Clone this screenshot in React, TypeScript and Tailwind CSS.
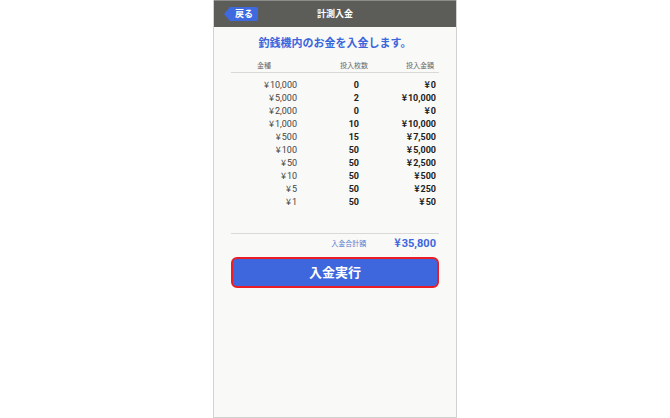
import React from "react";

const rows: [string, string, string][] = [
  ["10,000", "0", "0"],
  ["5,000", "2", "10,000"],
  ["2,000", "0", "0"],
  ["1,000", "10", "10,000"],
  ["500", "15", "7,500"],
  ["100", "50", "5,000"],
  ["50", "50", "2,500"],
  ["10", "50", "500"],
  ["5", "50", "250"],
  ["1", "50", "50"],
];

function Yen() {
  return (
    <span className="leading-none mr-[1px]" style={{ fontFamily: '"Noto Sans CJK JP", sans-serif' }}>
      ¥
    </span>
  );
}

export default function App() {
  return (
    <div
      className="w-[670px] h-[418px] bg-white flex justify-center overflow-hidden"
      style={{ fontFamily: 'Roboto, "Noto Sans CJK JP", sans-serif' }}
    >
      <div className="w-[244px] h-[418px] flex flex-col bg-[#f9f9f7] border-x border-b border-[#d2d2d0]">
        <div className="h-[27px] bg-[#5c5d59] border-t border-[#8c8c8a] relative flex items-center justify-center">
          <div className="absolute left-[10px] top-[6px] flex items-center">
            <div className="w-0 h-0 border-y-[7px] border-y-transparent border-r-[6px] border-r-[#3f69df]" />
            <div className="h-[14px] w-[28px] bg-[#3f69df] rounded-r-[2px] flex items-center justify-center text-white text-[9px] font-bold leading-none">
              戻る
            </div>
          </div>
          <div className="text-white text-[9px] font-bold leading-none">計測入金</div>
        </div>

        <div className="px-[17px] flex flex-col">
          <div className="pt-[10px] h-[24px] text-center text-[11px] leading-[14px] font-bold text-[#3b66dc]">
            釣銭機内のお金を入金します。
          </div>
          <div className="mt-[10px] grid grid-cols-[66px_74px_1fr] text-[7px] leading-[10px] text-[#666] pb-[1px] border-b border-[#d9d9d7]">
            <div className="text-center">金種</div>
            <div className="text-right pr-[3px]">投入枚数</div>
            <div className="text-right pr-[5px]">投入金額</div>
          </div>
          <div className="mt-[6px] flex flex-col">
            {rows.map(([d, c, a]) => (
              <div key={d} className="grid grid-cols-[66px_62px_1fr] h-[13px] text-[9px] leading-[13px] pr-[3px]">
                <div className="text-right text-[#444]">
                  <Yen />
                  {d}
                </div>
                <div className="text-right font-bold text-[#222]">{c}</div>
                <div className="text-right font-bold text-[#222]">
                  <Yen />
                  {a}
                </div>
              </div>
            ))}
          </div>
          <div className="mt-[24px] border-t border-[#d9d9d7] h-[21px] flex items-center justify-end pr-[3px]">
            <div className="text-[7px] text-[#5a7bd0] mr-[28px]">入金合計額</div>
            <div className="text-[11px] leading-[14px] font-bold text-[#3b66dc]">
              <Yen />
              35,800
            </div>
          </div>
          <div className="mt-[3px] h-[31px] rounded-[6px] border-2 border-[#ea1c24] bg-[#3e67de] flex items-center justify-center text-white text-[13px] font-bold">
            入金実行
          </div>
        </div>
      </div>
    </div>
  );
}
